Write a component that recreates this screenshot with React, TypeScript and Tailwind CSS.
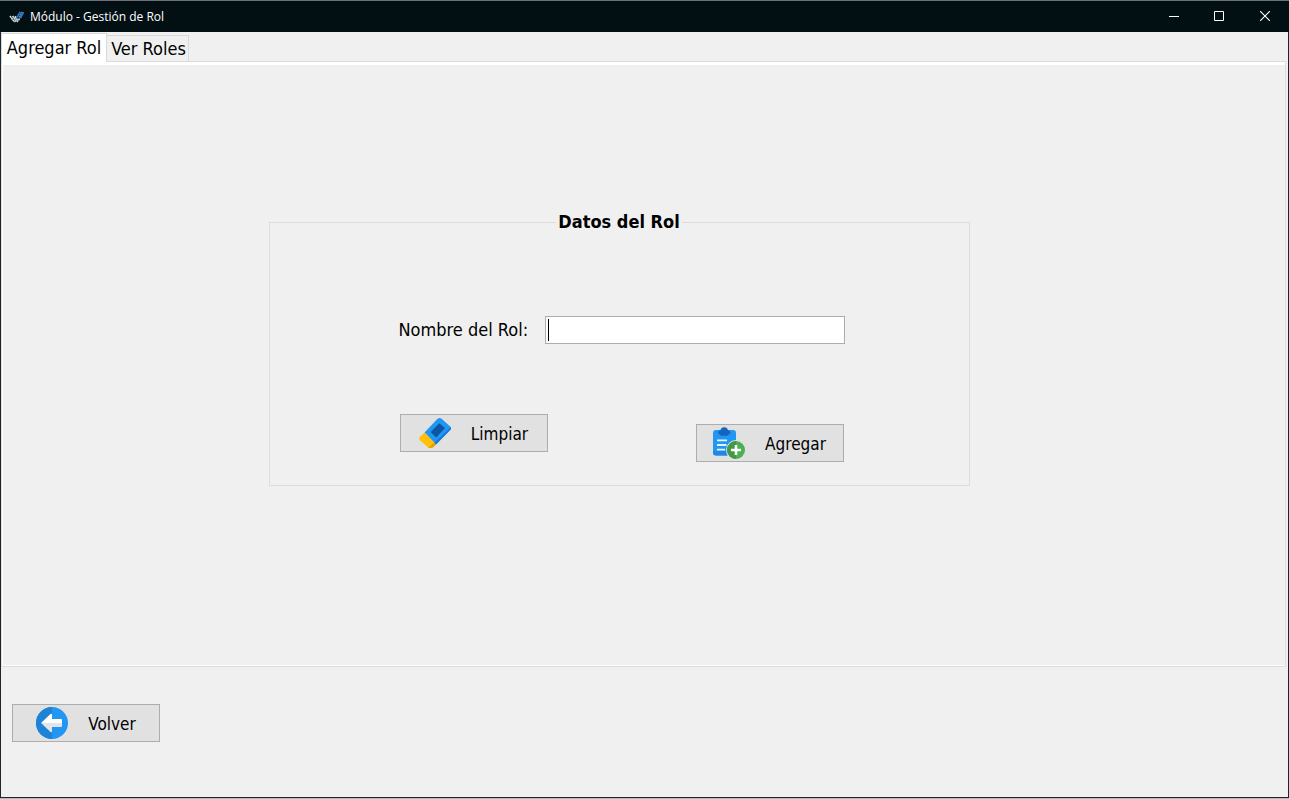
import { useState } from "react";
import type { ReactNode } from "react";

function AppLogo() {
  return (
    <svg viewBox="0 0 16 16" className="h-4 w-4" aria-hidden="true">
      <g fill="none" strokeWidth="1.6" strokeDasharray="2 0.3">
        <path d="M2 7 6 12.4M4.6 7 8 11.6M7 7.2 8.6 9.6" stroke="#d5dcdf" />
        <path d="M6.4 13 10 9.4M8.8 13 12 9.4" stroke="#c3ced4" />
        <path d="M9 8.2 12.2 3M11 8.6 14 3M12.6 9 15.6 3.2" stroke="#3382d2" />
      </g>
    </svg>
  );
}

function EraserIcon() {
  return (
    <svg viewBox="0 0 32 32" className="h-8 w-8" aria-hidden="true">
      <path d="M5.5 15.5 18.6 1.7Q20.6.2 22.6 1.7L31.2 9.6Q32.8 11.2 31.4 12.8L17 27.5Z" fill="#2196f3" />
      <path d="m17 27.5 14.4-14.7Q32.4 11.6 31.7 10.3L14.9 26.3Z" fill="#1976d2" />
      <path d="M5.5 15.5 1 19.8Q-.5 21.5 1 23.2L8.3 29.8Q10.7 31.6 13.6 30.6L17 27.5Z" fill="#ffc107" />
      <path d="m15.1 25.5 1.9 2-3.4 3.1q-2.8 1-5.2-.7 3 .4 4.2-1.8Z" fill="#dfa000" />
      <path d="M11.7 15 19.5 7Q20.4 6.2 21.3 7L26 11 18 19.8Q17.2 20.5 16.4 19.8Z" fill="#0d57a1" />
    </svg>
  );
}

function ClipboardAddIcon() {
  return (
    <svg viewBox="0 0 32 32" className="h-8 w-8" aria-hidden="true">
      <rect y="3" width="23" height="25.5" rx="3" fill="#2196f3" />
      <path d="M0 24h14v4.5H3q-3 0-3-3Z" fill="#1e88e5" />
      <path d="M5 6Q5 3.5 7.5 3.2 8 .2 11.2.2T15 3.2Q17.5 3.5 17.5 6L14.5 8.8H8Z" fill="#1565c0" />
      <path d="M4 13.3h10M4 18h9.5M4 22.7h8" stroke="#e8f2fb" strokeWidth="1.8" />
      <circle cx="23" cy="23" r="10" fill="#e1e1e1" />
      <circle cx="23" cy="23" r="9" fill="#4caf50" />
      <path d="M23 14a9 9 0 0 0 0 18Z" fill="#429846" />
      <path d="M23 18v10M18 23h10" stroke="#fff" strokeWidth="2.6" />
    </svg>
  );
}

function BackIcon() {
  return (
    <svg viewBox="0 0 32 32" className="h-8 w-8" aria-hidden="true">
      <circle cx="16" cy="16" r="16" fill="#2196f3" />
      <path d="M16 0a16 16 0 0 0 0 32Z" fill="#1e82d6" />
      <path d="M5 16 14.5 7Q16 6 16 7.8V12H25Q26 12 26 13V16Z" fill="#fff" />
      <path d="M5 16 14.5 25Q16 26 16 24.2V20H25Q26 20 26 19V16Z" fill="#e1e4e8" />
    </svg>
  );
}

type ActionProps = { icon: ReactNode; label: string; onClick?: () => void };

function ActionButton({ icon, label, onClick }: ActionProps) {
  return (
    <button
      type="button"
      onClick={onClick}
      className="flex h-[38px] w-[148px] items-center justify-center gap-5 border border-[#adadad] bg-[#e1e1e1] text-[17px] leading-6 text-black"
    >
      {icon}
      <span className="pt-0.5">{label}</span>
    </button>
  );
}

function TitleBar() {
  return (
    <header className="flex h-8 items-center justify-between border-t border-[#6b707a] bg-[#020f13] pl-2 pr-px text-white">
      <div className="flex items-center gap-1.5">
        <AppLogo />
        <h1 className="font-['Open_Sans','Noto_Sans',sans-serif] text-xs leading-4">Módulo - Gestión de Rol</h1>
      </div>
      <div className="flex h-full pb-px">
        <button type="button" aria-label="Minimizar" className="grid w-[45px] place-items-center">
          <svg viewBox="0 0 10 10" className="h-2.5 w-2.5"><path d="M0 5.5h10" stroke="#fff" /></svg>
        </button>
        <button type="button" aria-label="Maximizar" className="grid w-[45px] place-items-center">
          <svg viewBox="0 0 10 10" className="h-2.5 w-2.5"><path d="M.5.5h9v9h-9Z" fill="none" stroke="#fff" /></svg>
        </button>
        <button type="button" aria-label="Cerrar" className="grid w-[47px] place-items-center">
          <svg viewBox="0 0 10 10" className="h-2.5 w-2.5"><path d="m0 0 10 10M10 0 0 10" stroke="#fff" strokeWidth="1.1" /></svg>
        </button>
      </div>
    </header>
  );
}

export default function App() {
  const [name, setName] = useState("");

  return (
    <div className="flex min-h-screen flex-col border-b border-[#b4bcc0] bg-[#f0f0f0] font-['DejaVu_Sans_Condensed','Noto_Sans',sans-serif] text-lg leading-6 text-black">
      <TitleBar />
      <div className="flex flex-1 flex-col border-x border-b border-[#1c272d]">
        <main className="flex flex-1 flex-col pr-0.5">
          <div role="tablist" className="flex h-[29px] items-end">
            <button
              type="button"
              role="tab"
              aria-selected="true"
              className="z-10 -mb-px h-[29px] w-[106px] whitespace-nowrap border border-b-0 border-[#d9d9d9] bg-white text-center"
            >
              Agregar Rol
            </button>
            <button
              type="button"
              role="tab"
              aria-selected="false"
              className="h-[26px] w-[82px] whitespace-nowrap border border-b-0 border-l-0 border-[#d9d9d9] bg-[#f0f0f0] pl-0.5 text-center"
            >
              Ver Roles
            </button>
          </div>
          <section role="tabpanel" className="flex flex-1 flex-col border border-[#dcdcdc]">
            <div className="flex flex-1 justify-center border-b border-l border-t-[3px] border-white pr-[50px] pt-[145px]">
              <fieldset className="h-[276px] w-[701px] border border-[#dcdcdc]">
                <legend className="mx-auto px-0.5 font-bold">Datos del Rol</legend>
                <div className="pl-[129px] pr-[124px]">
                  <div className="flex items-center justify-between pt-[82px]">
                    <label htmlFor="nombre-rol">Nombre del Rol:</label>
                    <div className="relative">
                      <input
                        id="nombre-rol"
                        type="text"
                        value={name}
                        onChange={(event) => setName(event.target.value)}
                        className="block h-7 w-[300px] border border-[#abadb3] bg-white px-0.5 outline-none"
                      />
                      {name === "" && <span className="pointer-events-none absolute left-[3px] top-[3px] h-[22px] w-px bg-black" />}
                    </div>
                  </div>
                  <div className="flex items-start justify-between px-px pt-[70px]">
                    <ActionButton icon={<EraserIcon />} label="Limpiar" onClick={() => setName("")} />
                    <div className="pt-2.5">
                      <ActionButton icon={<ClipboardAddIcon />} label="Agregar" />
                    </div>
                  </div>
                </div>
              </fieldset>
            </div>
          </section>
        </main>
        <footer className="px-[11px] pb-[55px] pt-[37px]">
          <ActionButton icon={<BackIcon />} label="Volver" />
        </footer>
      </div>
    </div>
  );
}
